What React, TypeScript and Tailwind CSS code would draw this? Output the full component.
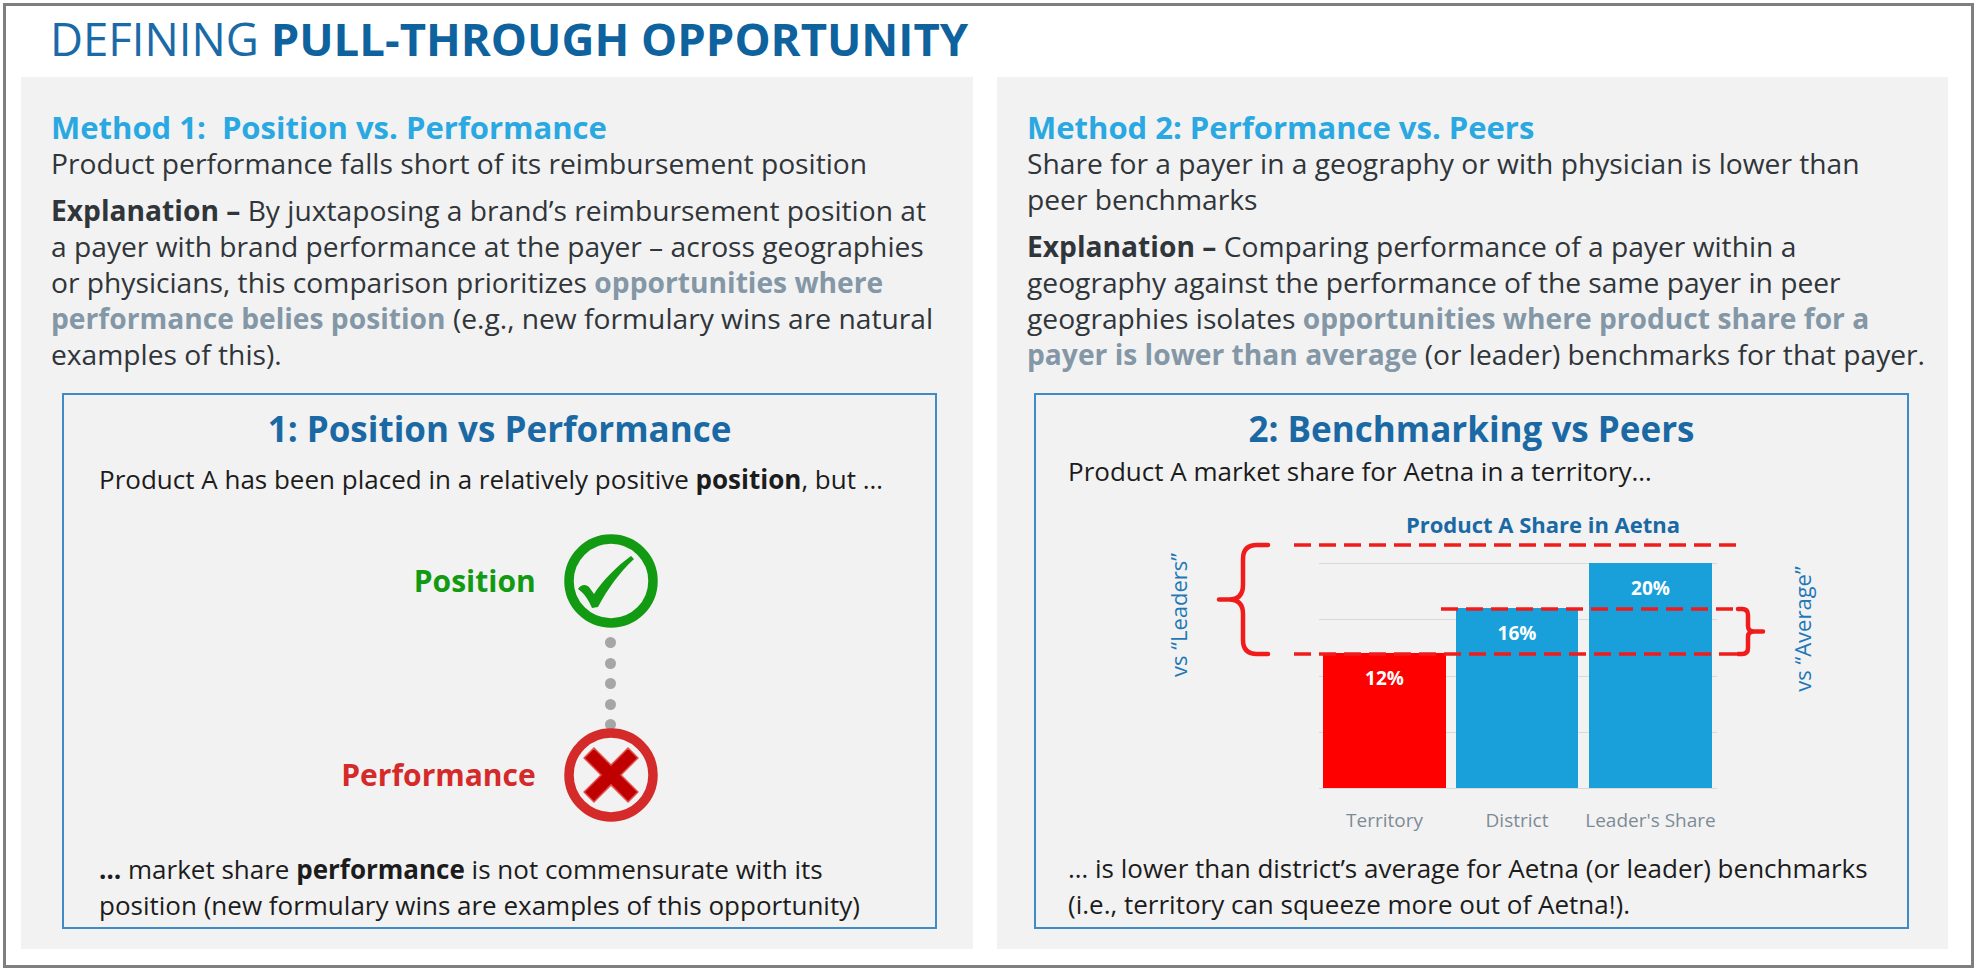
import React from "react";

const HL = "font-bold text-[#8497a6]";

function CheckCircle() {
  return (
    <svg width="94" height="94" viewBox="0 0 94 94" className="block">
      <circle cx="47" cy="47" r="42" fill="none" stroke="#129a12" strokeWidth="9.5" />
      <path
        d="M14 55 C17 50 22 50 25 53 L30 60 C39 46 52 33 67 22 L70 25 C56 38 44 54 34 73 L28 74 C25 67 21 60 14 55 Z"
        fill="#129a12"
      />
    </svg>
  );
}

function CrossCircle() {
  return (
    <svg width="94" height="94" viewBox="0 0 94 94" className="block relative">
      <circle cx="47" cy="47" r="42" fill="#f2f2f2" stroke="#d42a2a" strokeWidth="9.5" />
      <polygon
        points="47,37.1 64.05,20.05 73.95,29.95 56.9,47 73.95,64.05 64.05,73.95 47,56.9 29.95,73.95 20.05,64.05 37.1,47 20.05,29.95 29.95,20.05"
        fill="#c00000"
        stroke="#e2504e"
        strokeWidth="1.5"
        strokeLinejoin="round"
      />
    </svg>
  );
}

function Dots() {
  return (
    <div className="h-[100px] flex flex-col items-center pt-[9px] gap-[9.5px]">
      {[0, 1, 2, 3, 4].map((i) => (
        <div key={i} className="w-[11px] h-[11px] shrink-0 rounded-full bg-[#a6a6a6]" />
      ))}
    </div>
  );
}

function Chart() {
  const grid = [63.5, 119.5, 176.5, 232.5, 288.5];
  const red = "#f01c1c";
  return (
    <svg width="871" height="345" viewBox="0 0 871 345" className="block mt-[13px]">
      <text x="507" y="33" textAnchor="middle" fontSize="22" fontWeight="700" fill="#1a69a4">
        Product A Share in Aetna
      </text>
      {grid.map((y) => (
        <line key={y} x1="283" x2="681" y1={y} y2={y} stroke="#d9d9d9" strokeWidth="1" />
      ))}
      <rect x="287" y="153" width="123" height="135" fill="#ff0000" />
      <rect x="420" y="108" width="122" height="180" fill="#199fda" />
      <rect x="553" y="63" width="123" height="225" fill="#199fda" />
      <text x="348.5" y="185" textAnchor="middle" fontSize="19" fontWeight="700" fill="#ffffff">12%</text>
      <text x="481" y="140" textAnchor="middle" fontSize="19" fontWeight="700" fill="#ffffff">16%</text>
      <text x="614.5" y="95" textAnchor="middle" fontSize="19" fontWeight="700" fill="#ffffff">20%</text>
      <text x="348.5" y="327" textAnchor="middle" fontSize="19" fill="#7d8b97">Territory</text>
      <text x="481" y="327" textAnchor="middle" fontSize="19" fill="#7d8b97">District</text>
      <text x="614.5" y="327" textAnchor="middle" fontSize="19" fill="#7d8b97">Leader's Share</text>
      <g stroke={red} strokeWidth="3.5" strokeDasharray="17 8" fill="none">
        <line x1="258" x2="702" y1="45" y2="45" />
        <line x1="405" x2="701" y1="109" y2="109" />
        <line x1="258" x2="701" y1="154" y2="154" />
      </g>
      <g stroke={red} strokeWidth="4.5" fill="none" strokeLinecap="round" strokeLinejoin="round">
        <path d="M232 45 H221 Q207 45 207 59 V85 Q207 99.5 193 99.5 H183 M193 99.5 Q207 99.5 207 114 V140 Q207 154 221 154 H232" />
        <path d="M702 109 H706 Q712 109 712 115 V126 Q712 131.5 718 131.5 H727 M718 131.5 Q712 131.5 712 137 V148 Q712 154 706 154 H702" />
      </g>
      <text
        x="142"
        y="115"
        transform="rotate(-90 142 115)"
        textAnchor="middle"
        dominantBaseline="central"
        fontSize="22"
        fill="#1f78b7"
      >
        vs “Leaders”
      </text>
      <text
        x="766"
        y="129"
        transform="rotate(-90 766 129)"
        textAnchor="middle"
        dominantBaseline="central"
        fontSize="22"
        fill="#1f78b7"
      >
        vs “Average”
      </text>
    </svg>
  );
}

function PanelOne() {
  return (
    <section className="bg-[#f2f2f2] pt-[32px] text-[#30353a]">
      <div className="pl-[30px] whitespace-nowrap">
        <h2 className="text-[31px] leading-[36px] font-bold text-[#2aa8e2]">Method 1:&nbsp; Position vs. Performance</h2>
        <p className="text-[28.2px] leading-[36px]">Product performance falls short of its reimbursement position</p>
        <p className="mt-[11px] text-[28.2px] leading-[36px]">
          <b className="font-bold">Explanation –</b> By juxtaposing a brand’s reimbursement position at
          <br />a payer with brand performance at the payer – across geographies
          <br />or physicians, this comparison prioritizes <b className={HL}>opportunities where</b>
          <br />
          <b className={HL}>performance belies position</b> (e.g., new formulary wins are natural
          <br />examples of this).
        </p>
      </div>
      <div className="mt-[21px] ml-[41px] w-[875px] h-[536px] border-2 border-[#3f8bc6] text-[#1c1c1c]">
        <h3 className="pt-[14px] text-[35px] leading-[40px] font-bold text-center text-[#1a69a4]">
          1: Position vs Performance
        </h3>
        <p className="mt-[14px] pl-[35px] text-[26px] leading-[32px] whitespace-nowrap">
          Product A has been placed in a relatively positive <b className="font-bold">position</b>, but …
        </p>
        <div className="mt-[39px] flex justify-center">
          <div className="grid grid-cols-[auto_94px] gap-x-[28px] items-center">
            <div className="text-[30px] leading-[36px] font-bold text-[#129a12] text-right">Position</div>
            <CheckCircle />
            <div />
            <Dots />
            <div className="text-[30px] leading-[36px] font-bold text-[#d42a2a] text-right">Performance</div>
            <CrossCircle />
          </div>
        </div>
        <p className="mt-[29px] pl-[35px] text-[26px] leading-[36px] whitespace-nowrap">
          <b className="font-bold">…</b> market share <b className="font-bold">performance</b> is not commensurate with its
          <br />position (new formulary wins are examples of this opportunity)
        </p>
      </div>
    </section>
  );
}

function PanelTwo() {
  return (
    <section className="bg-[#f2f2f2] pt-[32px] text-[#30353a]">
      <div className="pl-[30px] whitespace-nowrap">
        <h2 className="text-[31px] leading-[36px] font-bold text-[#2aa8e2]">Method 2: Performance vs. Peers</h2>
        <p className="text-[28.2px] leading-[36px]">
          Share for a payer in a geography or with physician is lower than
          <br />peer benchmarks
        </p>
        <p className="mt-[11px] text-[28.2px] leading-[36px]">
          <b className="font-bold">Explanation –</b> Comparing performance of a payer within a
          <br />geography against the performance of the same payer in peer
          <br />geographies isolates <b className={HL}>opportunities where product share for a</b>
          <br />
          <b className={HL}>payer is lower than average</b> (or leader) benchmarks for that payer.
        </p>
      </div>
      <div className="mt-[21px] ml-[37px] w-[875px] h-[536px] border-2 border-[#3f8bc6] text-[#1c1c1c]">
        <h3 className="pt-[14px] text-[35px] leading-[40px] font-bold text-center text-[#1a69a4]">
          2: Benchmarking vs Peers
        </h3>
        <p className="mt-[6px] pl-[32px] text-[26px] leading-[32px] whitespace-nowrap">
          Product A market share for Aetna in a territory…
        </p>
        <Chart />
        <p className="mt-[5px] pl-[32px] text-[26px] leading-[36px] whitespace-nowrap">
          … is lower than district’s average for Aetna (or leader) benchmarks
          <br />(i.e., territory can squeeze more out of Aetna!).
        </p>
      </div>
    </section>
  );
}

export default function App() {
  return (
    <div className="w-[1978px] h-[976px] bg-white p-[3px] font-['Open_Sans','Noto_Sans',sans-serif]">
      <div className="w-[1971px] h-[965px] border-[3px] border-[#7f7f7f] flex flex-col">
        <h1 className="pl-[44px] pt-[6px] text-[45.5px] leading-[52px] text-[#1b6aa8] whitespace-nowrap">
          <span className="font-normal">DEFINING </span>
          <span className="font-bold text-[#0e629d]">PULL-THROUGH OPPORTUNITY</span>
        </h1>
        <div className="mt-[13px] pl-[15px] grid grid-cols-[952px_951px] gap-x-[24px] h-[872px]">
          <PanelOne />
          <PanelTwo />
        </div>
      </div>
    </div>
  );
}
